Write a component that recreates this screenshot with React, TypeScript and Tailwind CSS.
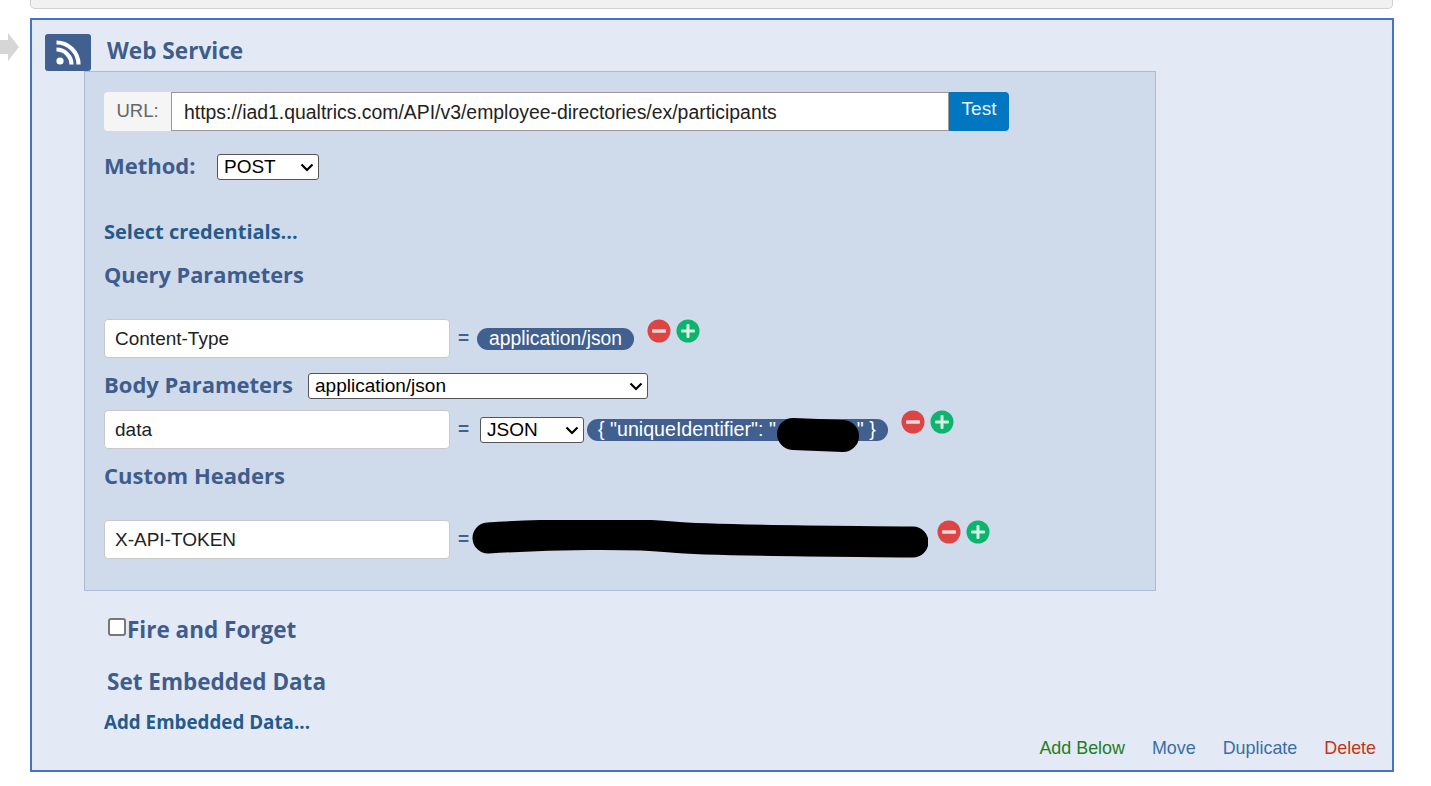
import React from 'react';

const labelFont = "font-['Open_Sans',sans-serif]";
const bodyFont = "font-['Liberation_Sans',sans-serif]";

const MinusButton = () => (
  <svg viewBox="0 0 24 24" className="h-[24px] w-[24px] shrink-0">
    <circle cx="12" cy="12" r="11.5" fill="#dd4444" />
    <rect x="5" y="10.25" width="14" height="3.5" rx="1" fill="#f3d9d9" />
  </svg>
);

const PlusButton = () => (
  <svg viewBox="0 0 24 24" className="h-[24px] w-[24px] shrink-0">
    <circle cx="12" cy="12" r="11.5" fill="#0cb46e" />
    <rect x="5" y="10.5" width="14" height="3" rx="1" fill="#d8f0e6" />
    <rect x="10.5" y="5" width="3" height="14" rx="1" fill="#d8f0e6" />
  </svg>
);

const RowButtons = ({ className }: { className: string }) => (
  <div className={`flex gap-[5px] self-start ${className}`}>
    <MinusButton />
    <PlusButton />
  </div>
);

const TextField = ({ value }: { value: string }) => (
  <input
    readOnly
    value={value}
    className={`h-[39px] w-[346px] shrink-0 rounded-[4px] border border-[#c9c9c9] bg-white px-[10px] text-[19px] text-[#222] ${bodyFont}`}
  />
);

const Equals = ({ className = '' }: { className?: string }) => (
  <span className={`text-[19px] font-bold text-[#41608f] ${bodyFont} ${className}`}>=</span>
);

const Heading = ({
  children,
  className = '',
  size = 'text-[22px]',
}: {
  children: React.ReactNode;
  className?: string;
  size?: string;
}) => (
  <div className={`mb-[2px] font-bold leading-[26px] text-[#3f5d8c] ${size} ${labelFont} ${className}`}>{children}</div>
);

const Dropdown = ({ value, className }: { value: string; className: string }) => (
  <div className={`relative h-[26px] ${className}`}>
    <select
      defaultValue={value}
      className={`h-full w-full appearance-none rounded-[3px] border border-[#555] bg-white py-0 pl-[6px] text-[19px] leading-[22px] text-black ${bodyFont}`}
    >
      <option>{value}</option>
    </select>
    <svg viewBox="0 0 14 9" className="pointer-events-none absolute right-[5px] top-[9px] h-[9px] w-[14px]">
      <path d="M1.5 1.5L7 7L12.5 1.5" fill="none" stroke="#000" strokeWidth="2.2" />
    </svg>
  </div>
);

export default function App() {
  return (
    <div className="relative min-h-[786px] w-[1431px] overflow-hidden bg-white">
      {/* previous block, cut off by the top of the page */}
      <div className="ml-[30px] h-[9px] w-[1363px] rounded-b-[5px] border border-t-0 border-[#d0d0d0] bg-[#f1f1f1]" />

      {/* move arrow */}
      <svg viewBox="0 0 19 28" className="absolute left-0 top-[33px] h-[28px] w-[19px]">
        <path d="M0 7H8V0L19 14L8 28V21H0Z" fill="#d6d6d6" />
      </svg>

      <div className="relative ml-[30px] mt-[9px] h-[754px] w-[1364px] border-2 border-[#4472c4] bg-[#e4eaf5]">
        <div className="flex h-[51px] items-start pl-[13px] pt-[14px]">
          <div className="flex h-[37px] w-[46px] items-center justify-center rounded-[3px] bg-[#41608f]">
            <svg viewBox="0 0 26 26" className="h-[26px] w-[26px]">
              <circle cx="5" cy="21" r="3.6" fill="#fff" />
              <path d="M1.5 9.5a15 15 0 0 1 15 15" fill="none" stroke="#fff" strokeWidth="4.2" />
              <path d="M1.5 2.5a22 22 0 0 1 22 22" fill="none" stroke="#fff" strokeWidth="4.2" />
            </svg>
          </div>
          <div className={`ml-[16px] text-[22.6px] font-bold leading-[34px] text-[#3f5d8c] ${labelFont}`}>Web Service</div>
        </div>

        <div className="ml-[52px] h-[520px] w-[1072px] border border-[#abbbd6] bg-[#cfdaeb] pl-[19px] pt-[20px]">
          <div className="flex h-[39px] w-[905px]">
            <div className={`flex w-[67px] items-start justify-center rounded-l-[4px] bg-[#f5f5f5] pt-[5px] text-[18.5px] text-[#666] ${bodyFont}`}>URL:</div>
            <div className={`flex flex-1 items-center border border-[#999] bg-white pl-[12px] pt-[2px] text-[19.4px] text-[#222] ${bodyFont}`}>
              https://iad1.qualtrics.com/API/v3/employee-directories/ex/participants
            </div>
            <div className={`flex w-[60px] items-start justify-center rounded-r-[4px] bg-[#0077c0] pt-[3px] text-[19px] text-[#e8f6ff] ${bodyFont}`}>Test</div>
          </div>

          <div className="mt-[22px] flex h-[28px] items-center">
            <Heading className="w-[113px] -translate-y-[1px]">Method:</Heading>
            <Dropdown value="POST" className="w-[102px]" />
          </div>

          <div className={`mt-[37px] text-[20px] font-bold leading-[28px] text-[#255a8c] ${labelFont}`}>Select credentials...</div>
          <Heading className="mt-[16px]" size="text-[21.8px]">Query Parameters</Heading>

          <div className="mt-[31px] flex h-[39px] items-center">
            <TextField value="Content-Type" />
            <Equals className="ml-[8px]" />
            <span className={`ml-[8px] flex h-[22px] items-center whitespace-nowrap rounded-[11px] bg-[#41608f] px-[12px] pt-[2px] text-[19.3px] text-white ${bodyFont}`}>
              application/json
            </span>
            <RowButtons className="ml-[13px]" />
          </div>

          <div className="mt-[14px] flex h-[28px] items-center">
            <Heading className="w-[204px] -translate-y-[1px]">Body Parameters</Heading>
            <Dropdown value="application/json" className="w-[340px]" />
          </div>

          <div className="mt-[10px] flex h-[39px] items-center">
            <TextField value="data" />
            <Equals className="ml-[8px]" />
            <Dropdown value="JSON" className="ml-[11px] w-[104px]" />
            <div className="relative ml-[3px]">
              <span className={`flex h-[22px] w-[301px] items-center whitespace-nowrap rounded-[11px] bg-[#41608f] pl-[11px] text-[19.6px] text-white ${bodyFont}`}>
                {'{ "uniqueIdentifier": "'}
                <span className="inline-block w-[81px]" />
                {'" }'}
              </span>
              {/* redaction scribble */}
              <svg viewBox="0 0 85 36" className="absolute left-[189px] top-[-2px] h-[36px] w-[85px]">
                <path d="M17 17L67 19" fill="none" stroke="#000" strokeWidth="32" strokeLinecap="round" />
              </svg>
            </div>
            <RowButtons className="ml-[13px]" />
          </div>

          <Heading className="mt-[13px]">Custom Headers</Heading>

          <div className="mt-[32px] flex h-[39px] items-center">
            <TextField value="X-API-TOKEN" />
            <Equals className="ml-[8px]" />
            <div className="relative ml-[3px] h-[39px] w-[456px]">
              {/* redaction scribble */}
              <svg viewBox="0 0 456 39" className="absolute left-0 top-0 h-[39px] w-[456px]">
                <path d="M16 18C80 14 160 13 200 17S340 21 441 22" fill="none" stroke="#000" strokeWidth="31" strokeLinecap="round" />
              </svg>
            </div>
            <RowButtons className="ml-[9px]" />
          </div>
        </div>

        <div className="ml-[76px] mt-[26px] flex h-[28px] items-center">
          <input type="checkbox" className="h-[18px] w-[18px] -translate-y-[4px] appearance-none rounded-[3px] border-2 border-[#777] bg-white" />
          <Heading className="ml-[1px]" size="text-[22.5px]">Fire and Forget</Heading>
        </div>
        <Heading className="ml-[75px] mt-[24px]" size="text-[22.5px]">Set Embedded Data</Heading>
        <div className={`ml-[72px] mt-[13px] text-[18.8px] font-bold leading-[28px] text-[#255a8c] ${labelFont}`}>Add Embedded Data...</div>

        <div className={`absolute bottom-[10px] right-[16px] flex gap-[27px] text-[17.9px] leading-[24px] ${bodyFont}`}>
          <span className="text-[#1e7d1e]">Add Below</span>
          <span className="text-[#3a6ea5]">Move</span>
          <span className="text-[#3a6ea5]">Duplicate</span>
          <span className="text-[#c8330f]">Delete</span>
        </div>
      </div>
    </div>
  );
}
